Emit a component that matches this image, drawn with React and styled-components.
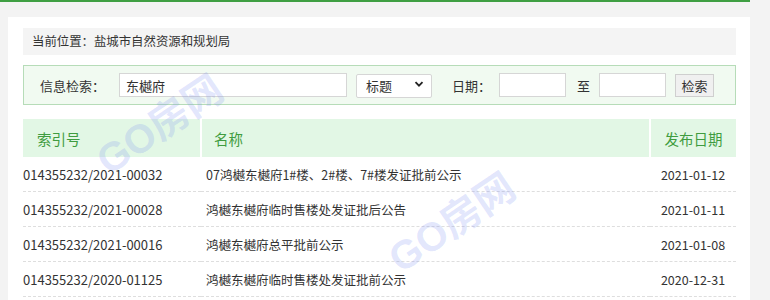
import React from 'react';
import styled, {createGlobalStyle} from 'styled-components';

const rows = [
    {index: '014355232/2021-00032', name: '07鸿樾东樾府1#楼、2#楼、7#楼发证批前公示', date: '2021-01-12'},
    {index: '014355232/2021-00028', name: '鸿樾东樾府临时售楼处发证批后公告', date: '2021-01-11'},
    {index: '014355232/2021-00016', name: '鸿樾东樾府总平批前公示', date: '2021-01-08'},
    {index: '014355232/2020-01125', name: '鸿樾东樾府临时售楼处发证批前公示', date: '2020-12-31'}
];

function App()
{
    return (
        <>
            <GlobalStyle/>
            <Page>
                <Panel>
                    <Breadcrumb>当前位置：盐城市自然资源和规划局</Breadcrumb>
                    <SearchBar>
                        <Label $gap={14}>信息检索：</Label>
                        <TextInput $width={228} defaultValue="东樾府"/>
                        <SelectWrap>
                            <Select defaultValue="title">
                                <option value="title">标题</option>
                            </Select>
                            <Chevron viewBox="0 0 10 10">
                                <path d="M1.5 3.2 L5 6.7 L8.5 3.2" fill="none" stroke="#222" strokeWidth="1.8"/>
                            </Chevron>
                        </SelectWrap>
                        <Label $gap={8} $left={20}>日期：</Label>
                        <TextInput $width={67}/>
                        <Label $gap={9} $left={11}>至</Label>
                        <TextInput $width={67}/>
                        <SearchButton>检索</SearchButton>
                    </SearchBar>
                    <Table>
                        <colgroup>
                            <col style={{width: 178}}/>
                            <col/>
                            <col style={{width: 86}}/>
                        </colgroup>
                        <thead>
                            <tr>
                                <HeadCell $pad={14}>索引号</HeadCell>
                                <HeadCell $pad={12}>名称</HeadCell>
                                <HeadCell $pad={0} $center>发布日期</HeadCell>
                            </tr>
                        </thead>
                        <tbody>
                            {rows.map((row) => (
                                <Row key={row.index}>
                                    <Cell $pad={0}>{row.index}</Cell>
                                    <Cell $pad={5} $size={12.5}>{row.name}</Cell>
                                    <Cell $pad={0} $size={12.5} $center>{row.date}</Cell>
                                </Row>
                            ))}
                        </tbody>
                    </Table>
                    <Watermark $x={104} $y={124}>GO房网</Watermark>
                    <Watermark $x={396} $y={222}>GO房网</Watermark>
                </Panel>
            </Page>
        </>
    );
}

const GlobalStyle = createGlobalStyle`
    body
    {
        margin: 0;
        background-color: #f3f3f3;
        font-family: "Microsoft YaHei", "Noto Sans CJK SC", sans-serif;
        color: #333;
    }
`;

const Page = styled.div`
    width: 750px;
    height: 300px;
    border-top: 2px solid #3f9f43;
    box-sizing: border-box;
    padding: 15px 0 0 8px;
    overflow: hidden;
`;

const Panel = styled.div`
    position: relative;
    width: 742px;
    height: 290px;
    box-sizing: border-box;
    background-color: #fff;
    padding: 11px 14px 0 15px;
`;

const Breadcrumb = styled.div`
    height: 27px;
    line-height: 27px;
    background-color: #f4f4f4;
    padding-left: 9px;
    font-size: 12.4px;
    color: #333;
`;

const SearchBar = styled.div`
    margin-top: 10px;
    height: 40px;
    box-sizing: border-box;
    border: 1px solid #b6dcb8;
    background-color: #f1faf1;
    display: flex;
    align-items: center;
    padding-left: 16px;
`;

const Label = styled.span`
    font-size: 13px;
    color: #333;
    margin-left: ${(props) => props.$left || 0}px;
    margin-right: ${(props) => props.$gap}px;
    white-space: nowrap;
`;

const TextInput = styled.input`
    width: ${(props) => props.$width}px;
    height: 24px;
    box-sizing: border-box;
    border: 1px solid #d6d6d6;
    background-color: #fff;
    padding: 0 6px;
    font-family: inherit;
    font-size: 13px;
    color: #333;
    outline: none;
`;

const SelectWrap = styled.div`
    position: relative;
    margin-left: 9px;
`;

const Select = styled.select`
    appearance: none;
    width: 76px;
    height: 24px;
    box-sizing: border-box;
    border: 1px solid #d6d6d6;
    border-radius: 2px;
    background-color: #fff;
    padding: 0 0 0 9px;
    font-family: inherit;
    font-size: 13px;
    color: #333;
    outline: none;
`;

const Chevron = styled.svg`
    position: absolute;
    right: 8px;
    top: 7px;
    width: 10px;
    height: 10px;
    pointer-events: none;
`;

const SearchButton = styled.button`
    margin-left: 9px;
    width: 39px;
    height: 23px;
    box-sizing: border-box;
    border: 1px solid #cfcfcf;
    background-color: #f0f0f0;
    font-family: inherit;
    font-size: 13px;
    color: #333;
    padding: 0;
`;

const Table = styled.table`
    margin-top: 14px;
    width: 100%;
    border-collapse: collapse;
    table-layout: fixed;
`;

const HeadCell = styled.th`
    height: 38px;
    padding: 0 0 0 ${(props) => props.$pad}px;
    background-color: #e2f7e5;
    border-right: 2px solid #fff;
    text-align: ${(props) => (props.$center ? 'center' : 'left')};
    font-weight: normal;
    font-size: 14.5px;
    color: #3f9c40;
    &:last-child
    {
        border-right: none;
    }
`;

const Row = styled.tr`
    border-bottom: 1px dashed #dedede;
`;

const Cell = styled.td`
    height: 34px;
    padding: 0 0 0 ${(props) => props.$pad}px;
    text-align: ${(props) => (props.$center ? 'center' : 'left')};
    font-size: ${(props) => props.$size || 13}px;
    color: #333;
    white-space: nowrap;
`;

const Watermark = styled.div`
    position: absolute;
    left: ${(props) => props.$x}px;
    top: ${(props) => props.$y}px;
    transform: rotate(-34deg);
    transform-origin: left bottom;
    font-family: "Liberation Sans", "Noto Sans CJK SC", sans-serif;
    font-weight: bold;
    font-size: 40px;
    line-height: 1;
    color: rgba(110, 130, 240, 0.2);
    white-space: nowrap;
    pointer-events: none;
`;

export default App;
